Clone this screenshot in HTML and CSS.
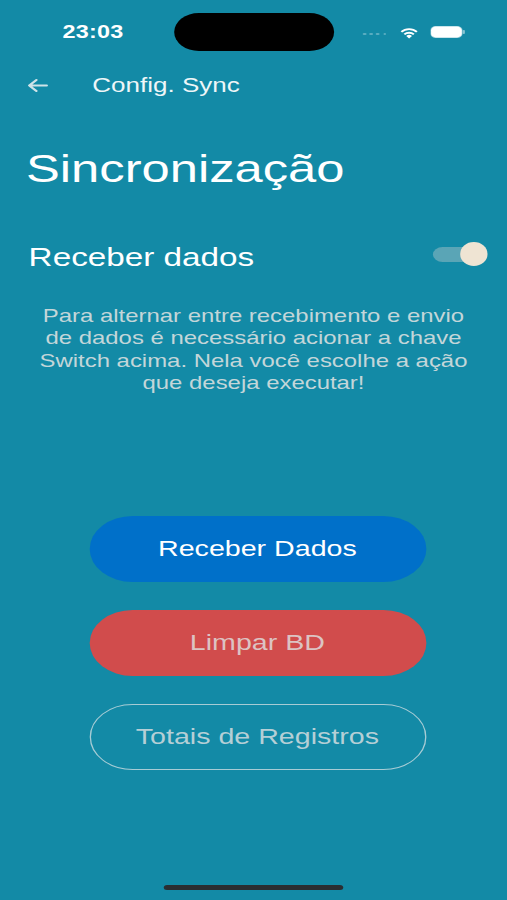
FILE: index.html
```html
<!DOCTYPE html>
<html lang="pt-BR">
<head>
<meta charset="utf-8">
<title>Config. Sync</title>
<link rel="stylesheet" href="styles.css">
</head>
<body>
<div class="screen">
  <div class="status">
    <span class="time">23:03</span>
    <span class="island"></span>
    <span class="status-icons">
      <span class="dots"><i></i><i></i><i></i><i></i></span>
      <svg class="wifi" viewBox="0 0 16 12" width="15.4" height="13" preserveAspectRatio="none">
        <path d="M8 11.6 L5.7 9.3 A3.3 3.3 0 0 1 10.3 9.3 Z" fill="#fff"/>
        <path d="M3.6 7.2 A6.3 6.3 0 0 1 12.4 7.2 L11.2 8.4 A4.6 4.6 0 0 0 4.8 8.4 Z" fill="#fff"/>
        <path d="M1.2 4.8 A9.6 9.6 0 0 1 14.8 4.8 L13.6 6 A7.9 7.9 0 0 0 2.4 6 Z" fill="#fff"/>
      </svg>
      <svg class="battery" viewBox="0 0 27 12" width="27" height="12">
        <rect x="0.6" y="0.6" width="23.6" height="10.8" rx="3.6" fill="#fff" stroke="rgba(255,255,255,0.55)" stroke-width="1.2"/>
        <rect x="2" y="2" width="20.8" height="8" rx="2.4" fill="#fff"/>
        <rect x="25" y="4" width="1.6" height="4" rx="0.8" fill="rgba(255,255,255,0.5)"/>
      </svg>
    </span>
  </div>

  <header class="nav">
    <svg class="back" viewBox="0 0 16 13" width="16" height="13">
      <path d="M15 6.5 H1.5 M7 1 L1.5 6.5 L7 12" fill="none" stroke="#cfe3e8" stroke-width="1.8" stroke-linecap="round" stroke-linejoin="round"/>
    </svg>
    <span class="nav-title">Config. Sync</span>
  </header>

  <main class="content">
    <h1 class="title">Sincronização</h1>
    <div class="row">
      <span class="row-label">Receber dados</span>
      <span class="switch"><span class="track"></span><span class="knob"></span></span>
    </div>
    <p class="desc">Para alternar entre recebimento e envio<br>de dados é necessário acionar a chave<br>Switch acima. Nela você escolhe a ação<br>que deseja executar!</p>
    <div class="actions">
      <button class="btn btn-blue">Receber Dados</button>
      <button class="btn btn-red">Limpar BD</button>
      <button class="btn btn-outline">Totais de Registros</button>
    </div>
  </main>

  <div class="home-bar"></div>
</div>
</body>
</html>
```

FILE: styles.css
```css
html, body {
  margin: 0;
  padding: 0;
  background: #138aa6;
  overflow: hidden;
}

.screen {
  width: 390px;
  height: 900px;
  transform: scaleX(1.3);
  transform-origin: 0 0;
  background: #138aa6;
  display: flex;
  flex-direction: column;
  font-family: "Liberation Sans", Arial, sans-serif;
  color: #fff;
}

.status {
  display: flex;
  align-items: center;
  height: 38px;
  margin-top: 13px;
}

.time {
  width: 86px;
  padding-left: 48px;
  box-sizing: border-box;
  font-size: 18px;
  font-weight: 700;
  letter-spacing: 0.2px;
}

.island {
  width: 123px;
  height: 38px;
  border-radius: 19px;
  background: #000;
  margin-left: 48px;
}

.status-icons {
  display: flex;
  align-items: center;
  margin-left: 22px;
}

.dots {
  display: flex;
  gap: 2.6px;
  margin-top: 4px;
}

.dots i {
  width: 2.6px;
  height: 2.4px;
  border-radius: 1px;
  background: rgba(255, 255, 255, 0.3);
}

.wifi {
  margin-left: 10px;
}

.battery {
  margin-left: 8.5px;
}

.nav {
  display: flex;
  align-items: center;
  height: 34px;
  margin-top: 17px;
}

.back {
  margin-left: 21px;
}

.nav-title {
  margin-left: 34px;
  font-size: 20px;
  color: #eef6f8;
}

.content {
  display: flex;
  flex-direction: column;
}

.title {
  margin: 44px 0 0 20px;
  font-size: 39px;
  line-height: 46px;
  font-weight: 400;
}

.row {
  display: flex;
  align-items: center;
  justify-content: space-between;
  margin: 50px 15px 0 22px;
  height: 30px;
}

.row-label {
  font-size: 25.6px;
  line-height: 30px;
}

.switch {
  position: relative;
  width: 42px;
  height: 24px;
  margin-top: -6px;
}

.track {
  position: absolute;
  left: 0;
  top: 4.5px;
  width: 32px;
  height: 15px;
  border-radius: 7.5px;
  background: #5aa5b6;
}

.knob {
  position: absolute;
  right: 0;
  top: 0;
  width: 21.5px;
  height: 24px;
  border-radius: 50%;
  background: #efe4d3;
}

.desc {
  margin: 33px 0 0;
  text-align: center;
  white-space: nowrap;
  font-size: 18.4px;
  line-height: 22.4px;
  color: #c3d6d9;
}

.actions {
  display: flex;
  flex-direction: column;
  align-items: center;
  gap: 28px;
  margin-top: 121px;
  padding-left: 6px;
}

.btn {
  width: 259px;
  height: 66px;
  border-radius: 33px;
  border: none;
  font-family: "Liberation Sans", Arial, sans-serif;
  font-size: 22px;
  padding: 0;
  box-sizing: border-box;
}

.btn-blue {
  background: #0070c9;
  color: #fff;
}

.btn-red {
  background: #d14c4c;
  color: #dcc3c3;
}

.btn-outline {
  background: transparent;
  border: 1.3px solid #a7ccd5;
  color: #b5cfd6;
}

.home-bar {
  margin: auto auto 10px;
  width: 138px;
  height: 5px;
  border-radius: 3px;
  background: #2a2e32;
}
```
